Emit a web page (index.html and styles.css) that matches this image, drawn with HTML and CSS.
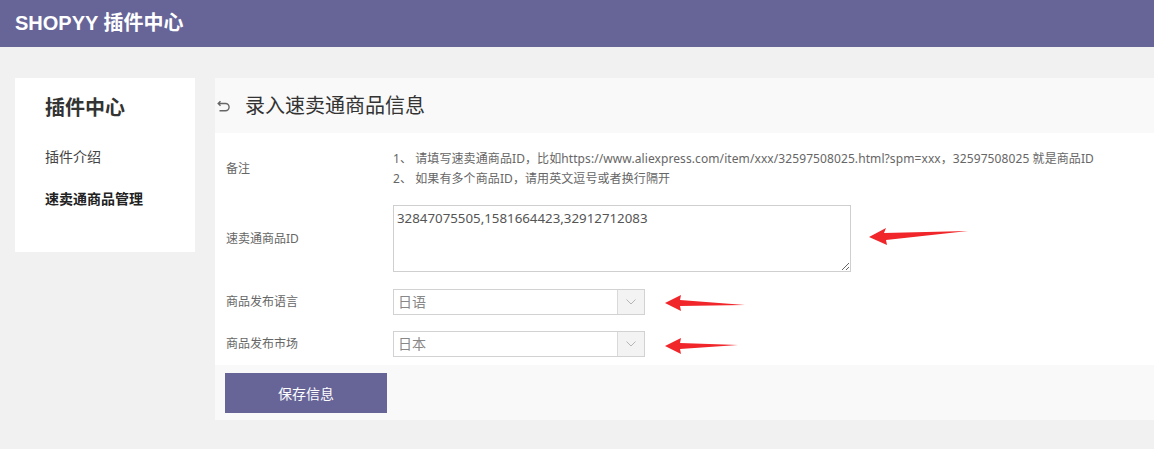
FILE: index.html
```html
<!DOCTYPE html>
<html lang="zh-CN">
<head>
<meta charset="utf-8">
<title>SHOPYY 插件中心</title>
<link rel="stylesheet" href="styles.css">
</head>
<body>
<header class="topbar">SHOPYY 插件中心</header>
<div class="main">
  <aside class="sidebar">
    <div class="side-title">插件中心</div>
    <div class="side-item">插件介绍</div>
    <div class="side-item active">速卖通商品管理</div>
  </aside>
  <section class="panel">
    <div class="panel-head">
      <svg class="back-icon" width="14" height="12" viewBox="0 0 14 12"><path d="M3.5 1.2 L1.2 3.5 L3.5 5.8 M1.2 3.5 H8.5 A3.6 3.6 0 0 1 8.5 10.7 H2.5" fill="none" stroke="#666" stroke-width="1.4"/></svg>
      <h1 class="panel-title">录入速卖通商品信息</h1>
    </div>
    <div class="form">
      <div class="row row-note">
        <div class="label">备注</div>
        <div class="note">
          <div>1、 请填写速卖通商品ID，比如https://www.aliexpress.com/item/xxx/32597508025.html?spm=xxx，32597508025 就是商品ID</div>
          <div>2、 如果有多个商品ID，请用英文逗号或者换行隔开</div>
        </div>
      </div>
      <div class="row row-ids">
        <div class="label">速卖通商品ID</div>
        <textarea class="ids">32847075505,1581664423,32912712083</textarea>
      </div>
      <div class="row row-sel1">
        <div class="label">商品发布语言</div>
        <div class="select"><span class="sel-val">日语</span><span class="sel-arrow"><svg width="10" height="6" viewBox="0 0 10 6"><path d="M0.5 0.5 L5 5 L9.5 0.5" fill="none" stroke="#b5b5b5" stroke-width="1"/></svg></span></div>
      </div>
      <div class="row row-sel2">
        <div class="label">商品发布市场</div>
        <div class="select"><span class="sel-val">日本</span><span class="sel-arrow"><svg width="10" height="6" viewBox="0 0 10 6"><path d="M0.5 0.5 L5 5 L9.5 0.5" fill="none" stroke="#b5b5b5" stroke-width="1"/></svg></span></div>
      </div>
    </div>
    <div class="panel-foot">
      <button class="save">保存信息</button>
    </div>
  </section>
</div>
<svg class="annot" width="1154" height="449" viewBox="0 0 1154 449">
  <polygon points="869,237 886,228 884,233 968,231 886,240 887,245" fill="#f0262a"/>
  <polygon points="665,303 681,295 680,300 745,305 680,306 681,311" fill="#f0262a"/>
  <polygon points="665,346 681,338 680,343 738,345 680,349 681,354" fill="#f0262a"/>
</svg>
</body>
</html>
```
FILE: styles.css
```css
* { box-sizing: border-box; }
body {
  margin: 0;
  background: #f1f1f1;
  font-family: "Noto Sans", "Noto Sans CJK SC", sans-serif;
  color: #333;
  position: relative;
  height: 449px;
  overflow: hidden;
}
.topbar {
  height: 47px;
  background: #676598;
  color: #fff;
  font-family: "Liberation Sans", "Noto Sans CJK SC", sans-serif;
  font-weight: bold;
  font-size: 20px;
  line-height: 47px;
  padding-left: 15px;
}
.main {
  display: flex;
  align-items: flex-start;
  gap: 20px;
  padding: 31px 0 0 15px;
}
.sidebar {
  width: 180px;
  height: 174px;
  background: #fff;
  padding: 18px 0 0 30px;
}
.side-title {
  font-size: 20px;
  font-weight: bold;
  line-height: 24px;
  color: #333;
  margin-bottom: 27px;
}
.side-item {
  font-size: 14px;
  line-height: 20px;
  color: #444;
  margin-bottom: 22px;
}
.side-item.active { font-weight: bold; color: #222; }
.panel {
  flex: 1;
  background: #f9f9f9;
}
.panel-head {
  height: 55px;
  display: flex;
  align-items: center;
  padding-left: 2px;
}
.back-icon { margin-right: 14px; margin-top: 1px; }
.panel-title {
  margin: 0;
  font-size: 20px;
  font-weight: normal;
  color: #333;
  line-height: 24px;
}
.form {
  background: #fff;
  height: 232px;
  padding-top: 16px;
}
.row {
  display: flex;
  align-items: center;
}
.label {
  width: 178px;
  padding-left: 11px;
  font-size: 12px;
  line-height: 20px;
  color: #666;
}
.note {
  font-size: 12px;
  line-height: 20px;
  color: #666;
  letter-spacing: 0.09px;
}
.row-ids { margin-top: 16px; }
.ids {
  width: 458px;
  height: 67px;
  border: 1px solid #cfcfcf;
  padding: 3px 3px;
  font-family: "Noto Sans", "Noto Sans CJK SC", sans-serif;
  font-size: 13.3px;
  line-height: 18px;
  color: #555;
  outline: none;
  margin: 0;
}
.row-sel1 { margin-top: 17px; }
.row-sel2 { margin-top: 16px; }
.select {
  width: 252px;
  height: 26px;
  border: 1px solid #d2d2d2;
  display: flex;
  align-items: stretch;
}
.sel-val {
  flex: 1;
  font-size: 14px;
  color: #888;
  line-height: 24px;
  padding-left: 4px;
}
.sel-arrow {
  width: 27px;
  background: #f3f3f3;
  border-left: 1px solid #d9d9d9;
  display: flex;
  align-items: center;
  justify-content: center;
}
.panel-foot {
  padding: 8px 0 7px 10px;
}
.save {
  width: 162px;
  height: 40px;
  border: 0;
  background: #676598;
  color: #fff;
  font-family: "Noto Sans", "Noto Sans CJK SC", sans-serif;
  font-size: 14px;
  display: block;
  padding: 0;
}
.annot {
  position: absolute;
  left: 0;
  top: 0;
  pointer-events: none;
}
```
